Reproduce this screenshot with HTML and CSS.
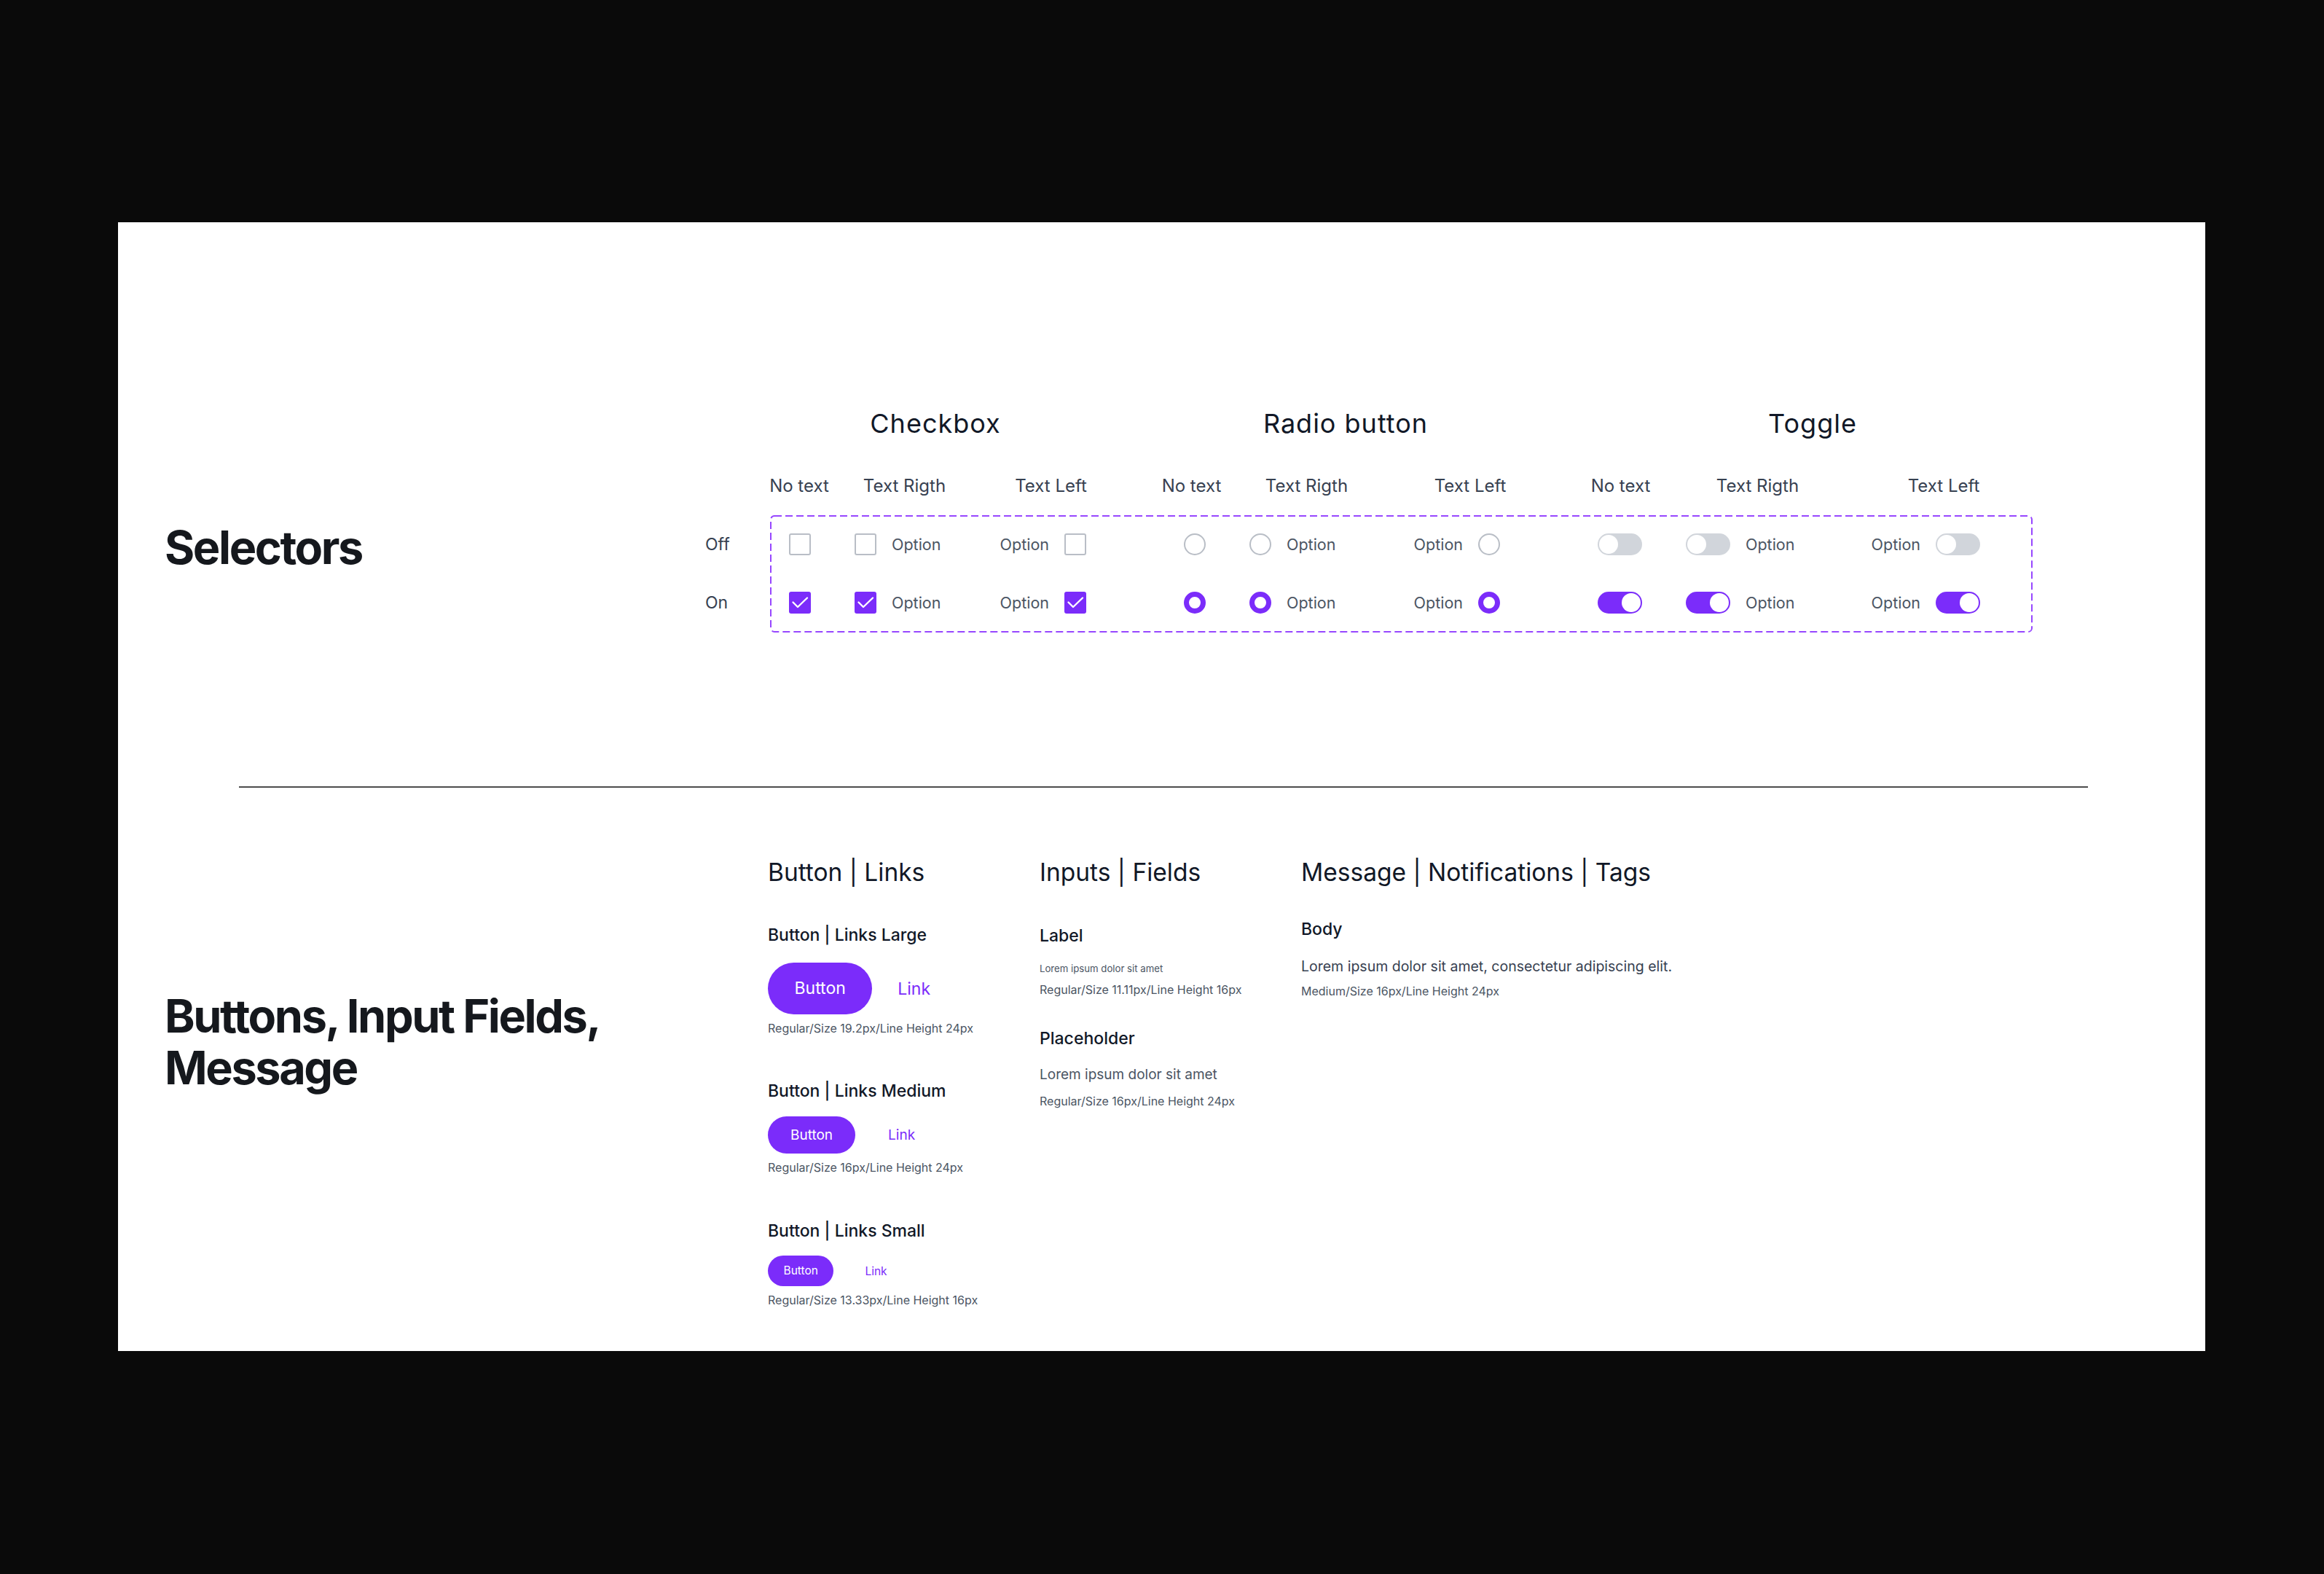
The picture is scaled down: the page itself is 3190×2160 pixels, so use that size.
FILE: index.html
```html
<!DOCTYPE html>
<html lang="en">
<head>
<meta charset="utf-8">
<title>Selectors &amp; Buttons</title>
<link rel="stylesheet" href="styles.css">
</head>
<body>
<main class="card">
  <section class="sel">
    <h1 class="title sel-title">Selectors</h1>
    <div class="table">
      <div class="heads">
        <div>Checkbox</div>
        <div>Radio button</div>
        <div>Toggle</div>
      </div>
      <div class="cols">
        <div>No text</div><div>Text Rigth</div><div>Text Left</div>
        <div>No text</div><div>Text Rigth</div><div>Text Left</div>
        <div>No text</div><div>Text Rigth</div><div>Text Left</div>
      </div>
      <div class="body">
        <div class="labels"><div>Off</div><div>On</div></div>
        <div class="box">
          <svg class="dash" aria-hidden="true"><rect class="dash-rect"/></svg>
          <div class="row">
            <div class="grp g-cb">
              <span class="cb"></span>
              <span class="item"><span class="cb"></span><span class="opt">Option</span></span>
              <span class="item end"><span class="opt">Option</span><span class="cb"></span></span>
            </div>
            <div class="grp g-rb">
              <span class="rb"></span>
              <span class="item"><span class="rb"></span><span class="opt">Option</span></span>
              <span class="item end"><span class="opt">Option</span><span class="rb"></span></span>
            </div>
            <div class="grp g-tg">
              <span class="tg"><span class="knob"></span></span>
              <span class="item"><span class="tg"><span class="knob"></span></span><span class="opt">Option</span></span>
              <span class="item end"><span class="opt">Option</span><span class="tg"><span class="knob"></span></span></span>
            </div>
          </div>
          <div class="row">
            <div class="grp g-cb">
              <span class="cb on"><svg viewBox="0 0 30 30"><path d="M5.5 14.5 L12 21 L25 8.5"/></svg></span>
              <span class="item"><span class="cb on"><svg viewBox="0 0 30 30"><path d="M5.5 14.5 L12 21 L25 8.5"/></svg></span><span class="opt">Option</span></span>
              <span class="item end"><span class="opt">Option</span><span class="cb on"><svg viewBox="0 0 30 30"><path d="M5.5 14.5 L12 21 L25 8.5"/></svg></span></span>
            </div>
            <div class="grp g-rb">
              <span class="rb on"></span>
              <span class="item"><span class="rb on"></span><span class="opt">Option</span></span>
              <span class="item end"><span class="opt">Option</span><span class="rb on"></span></span>
            </div>
            <div class="grp g-tg">
              <span class="tg on"><span class="knob"></span></span>
              <span class="item"><span class="tg on"><span class="knob"></span></span><span class="opt">Option</span></span>
              <span class="item end"><span class="opt">Option</span><span class="tg on"><span class="knob"></span></span></span>
            </div>
          </div>
        </div>
      </div>
    </div>
  </section>

  <hr class="divider">

  <section class="bot">
    <h2 class="title bot-title">Buttons, Input Fields,<br>Message</h2>

    <div class="col c1">
      <h3 class="chead">Button | Links</h3>
      <div class="grpb first">
        <div class="sub">Button | Links Large</div>
        <div class="btnrow lg"><span class="btn">Button</span><span class="link">Link</span></div>
        <div class="cap">Regular/Size 19.2px/Line Height 24px</div>
      </div>
      <div class="grpb md-g">
        <div class="sub">Button | Links Medium</div>
        <div class="btnrow md"><span class="btn">Button</span><span class="link">Link</span></div>
        <div class="cap">Regular/Size 16px/Line Height 24px</div>
      </div>
      <div class="grpb sm-g">
        <div class="sub">Button | Links Small</div>
        <div class="btnrow sm"><span class="btn">Button</span><span class="link">Link</span></div>
        <div class="cap">Regular/Size 13.33px/Line Height 16px</div>
      </div>
    </div>

    <div class="col c2">
      <h3 class="chead">Inputs | Fields</h3>
      <div class="sub label-h">Label</div>
      <div class="lorem-sm">Lorem ipsum dolor sit amet</div>
      <div class="cap cap-a">Regular/Size 11.11px/Line Height 16px</div>
      <div class="sub ph-h">Placeholder</div>
      <div class="lorem-md">Lorem ipsum dolor sit amet</div>
      <div class="cap cap-b">Regular/Size 16px/Line Height 24px</div>
    </div>

    <div class="col c3">
      <h3 class="chead">Message | Notifications | Tags</h3>
      <div class="sub body-h">Body</div>
      <div class="lorem-body">Lorem ipsum dolor sit amet, consectetur adipiscing elit.</div>
      <div class="cap cap-c">Medium/Size 16px/Line Height 24px</div>
    </div>
  </section>
</main>
</body>
</html>
```

FILE: styles.css
```css
html, body {
  margin: 0;
  background: #0a0a0a;
}
body {
  font-family: Inter, "Noto Sans", "Liberation Sans", sans-serif;
  color: #111827;
}

.card {
  margin: 305px 0 0 162px;
  width: 2865px;
  height: 1549px;
  box-sizing: border-box;
  padding: 256px 0 0 64px;
  background: #ffffff;
}

.title {
  margin: 0;
  font-weight: 700;
  font-size: 63px;
  letter-spacing: -2.4px;
  color: #15181d;
}

/* ---------- Selectors ---------- */
.sel {
  display: flex;
  align-items: flex-start;
}
.sel-title {
  width: 742px;
  flex: none;
  margin-top: 150px;
  line-height: 80px;
}

.heads {
  display: grid;
  grid-template-columns: 494px 632px 650px;
  margin-left: 69px;
  font-size: 36px;
  line-height: 40px;
  letter-spacing: 1px;
  text-align: center;
  color: #111827;
}
.cols {
  display: grid;
  grid-template-columns: 120px 169px 233px 153px 163px 286px 127px 249px 262px;
  margin: 51px 0 0 69px;
  font-size: 24px;
  line-height: 30px;
  text-align: center;
  color: #374151;
}

.body {
  display: flex;
  margin-top: 25px;
}
.labels {
  width: 89px;
  box-sizing: border-box;
  padding-top: 25px;
  display: flex;
  flex-direction: column;
  gap: 50px;
  font-size: 23px;
  line-height: 30px;
  color: #374151;
}

.box {
  position: relative;
  width: 1733px;
  height: 161px;
  box-sizing: border-box;
  padding: 25px 0 0 26px;
  display: flex;
  flex-direction: column;
  gap: 50px;
}
.dash {
  position: absolute;
  inset: 0;
  width: 100%;
  height: 100%;
  pointer-events: none;
}
.dash-rect {
  x: 1px;
  y: 1px;
  width: calc(100% - 2px);
  height: calc(100% - 2px);
  rx: 5px;
  ry: 5px;
  fill: none;
  stroke: #9747ff;
  stroke-width: 2px;
  stroke-dasharray: 10 5;
}

.row {
  display: flex;
  gap: 134px;
  height: 30px;
}
.grp {
  display: flex;
  align-items: center;
}
.g-cb { width: 408px; }
.g-rb { width: 434px; }
.g-tg { width: 525px; }
.grp > :first-child { margin-right: 60px; }
.item {
  display: flex;
  align-items: center;
  gap: 21px;
}
.item.end { margin-left: auto; }
.opt {
  font-size: 21.5px;
  line-height: 30px;
  color: #4b5563;
}

.cb {
  display: block;
  width: 30px;
  height: 30px;
  box-sizing: border-box;
  border: 2px solid #b9bec6;
  border-radius: 3px;
  background: #fff;
  flex: none;
}
.cb.on {
  border: none;
  background: #7b2cfa;
}
.cb svg {
  display: block;
  width: 30px;
  height: 30px;
}
.cb path {
  fill: none;
  stroke: #ffffff;
  stroke-width: 2.4;
  stroke-linecap: round;
  stroke-linejoin: round;
}

.rb {
  display: block;
  width: 30px;
  height: 30px;
  box-sizing: border-box;
  border: 2px solid #b9bec6;
  border-radius: 50%;
  background: #fff;
  flex: none;
}
.rb.on {
  border: 7.5px solid #7b2cfa;
}

.tg {
  display: flex;
  align-items: center;
  width: 61px;
  height: 30px;
  box-sizing: border-box;
  padding: 0 2px;
  border-radius: 15px;
  background: #d1d5db;
  flex: none;
}
.tg .knob {
  width: 26px;
  height: 26px;
  border-radius: 50%;
  background: #fff;
}
.tg.on {
  background: #7b2cfa;
  justify-content: flex-end;
}

/* ---------- Divider ---------- */
.divider {
  height: 2px;
  border: 0;
  margin: 211px 161px 0 102px;
  background: #4d4d4d;
}

/* ---------- Bottom section ---------- */
.bot {
  display: flex;
  align-items: flex-start;
  margin-top: 96px;
}
.bot-title {
  width: 828px;
  flex: none;
  margin-top: 182px;
  line-height: 71px;
}
.col {
  display: flex;
  flex-direction: column;
  align-items: flex-start;
}
.c1 { width: 373px; }
.c2 { width: 359px; }

.chead {
  margin: 0;
  font-weight: 400;
  font-size: 33.5px;
  line-height: 40px;
  color: #111827;
  white-space: nowrap;
}
.sub {
  font-weight: 500;
  font-size: 23px;
  line-height: 30px;
  color: #111827;
  white-space: nowrap;
}
.cap {
  font-size: 16px;
  line-height: 20px;
  color: #4b5563;
  white-space: nowrap;
}

.grpb { display: flex; flex-direction: column; align-items: flex-start; }
.grpb.first { margin-top: 51px; }
.grpb.md-g { margin-top: 61px; }
.grpb.sm-g { margin-top: 62px; }
.grpb .cap { margin-top: 9px; }

.btnrow { display: flex; align-items: center; }
.btn {
  display: block;
  background: #7b2cfa;
  color: #ffffff;
  border-radius: 999px;
  white-space: nowrap;
}
.link {
  color: #7b2cfa;
  white-space: nowrap;
}
.btnrow.lg { margin-top: 23px; }
.btnrow.lg .btn { height: 71px; line-height: 71px; padding: 0 36.5px; font-size: 23px; }
.btnrow.lg .link { margin-left: 35px; font-size: 23px; }
.btnrow.md { margin-top: 20px; }
.btnrow.md .btn { height: 51px; line-height: 51px; padding: 0 31px; font-size: 19px; }
.btnrow.md .link { margin-left: 45px; font-size: 19px; }
.btnrow.sm { margin-top: 19px; }
.btnrow.sm .btn { height: 42px; line-height: 42px; padding: 0 21.5px; font-size: 15.5px; }
.btnrow.sm .link { margin-left: 43px; font-size: 15.5px; }

.label-h { margin-top: 51.5px; }
.lorem-sm {
  margin-top: 20.5px;
  font-size: 13.2px;
  line-height: 20px;
  color: #4b5563;
  white-space: nowrap;
}
.cap-a { margin-top: 9px; }
.ph-h { margin-top: 42px; }
.lorem-md {
  margin-top: 20.5px;
  font-size: 19px;
  line-height: 28px;
  color: #4b5563;
  white-space: nowrap;
}
.cap-b { margin-top: 12px; }

.body-h { margin-top: 43px; }
.lorem-body {
  margin-top: 21.5px;
  font-size: 19.5px;
  line-height: 28px;
  color: #374151;
  white-space: nowrap;
}
.cap-c { margin-top: 10.5px; }
```
